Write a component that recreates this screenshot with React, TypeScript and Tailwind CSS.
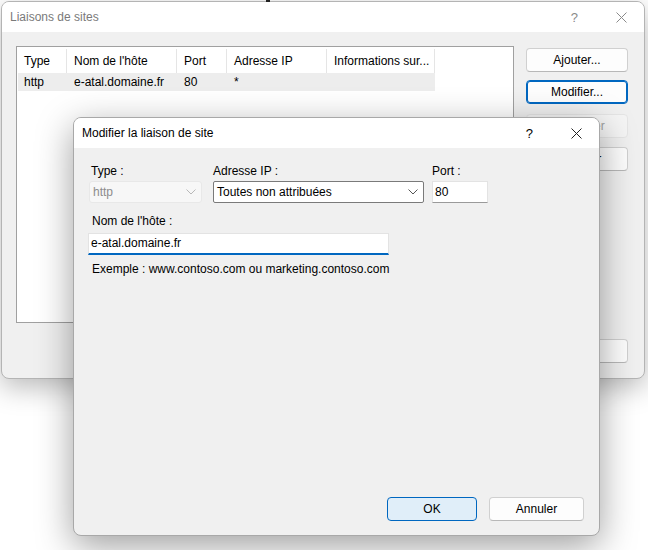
import React from 'react';

const Chevron: React.FC<{ color: string }> = ({ color }) => (
  <svg width="10" height="6" viewBox="0 0 10 6" fill="none">
    <path d="M0.5 0.5 L5 5 L9.5 0.5" stroke={color} strokeWidth="1" />
  </svg>
);

const CloseIcon: React.FC<{ color: string }> = ({ color }) => (
  <svg width="11" height="11" viewBox="0 0 11 11" fill="none">
    <path d="M0.5 0.5 L10.5 10.5 M10.5 0.5 L0.5 10.5" stroke={color} strokeWidth="1" />
  </svg>
);

const COLUMNS = [
  { label: 'Type', width: 'w-[50px]' },
  { label: "Nom de l'hôte", width: 'w-[110px]' },
  { label: 'Port', width: 'w-[50px]' },
  { label: 'Adresse IP', width: 'w-[100px]' },
  { label: 'Informations sur...', width: 'w-[108px]' },
];

const ROW = ['http', 'e-atal.domaine.fr', '80', '*', ''];

const WinButton: React.FC<{ label: string; className?: string; variant?: 'normal' | 'default' | 'disabled' | 'primary' }> = ({
  label,
  className = '',
  variant = 'normal',
}) => {
  const styles = {
    normal: 'bg-[#fdfdfd] border-[#d0d0d0] border-b-[#b8b8b8] text-black',
    default: 'bg-[#fdfdfd] border-[#0067c0] text-black shadow-[inset_0_0_0_1px_#0067c0]',
    disabled: 'bg-[#f5f5f5] border-[#e5e5e5] text-[#a0a0a0]',
    primary: 'bg-[#e0eef9] border-[#0067c0] text-black',
  }[variant];
  return (
    <div className={`h-[24px] flex items-center justify-center rounded-[4px] border text-[12px] ${styles} ${className}`}>
      {label}
    </div>
  );
};

export default function App() {
  return (
    <div className="relative w-[648px] h-[550px] bg-white overflow-hidden font-['Liberation_Sans',Arial,sans-serif] text-[12px] leading-[15px] text-black">
      {/* mouse pointer tip peeking at the top */}
      <span className="absolute left-[266px] top-0 w-[4px] h-[2px] bg-[#222] z-30" />

      {/* Back window: Liaisons de sites */}
      <div className="absolute left-[1px] top-[1px] w-[644px] h-[378px] rounded-[8px] border border-[#b4b4b4] bg-[#f0f0f0] overflow-hidden shadow-[0_8px_28px_rgba(0,0,0,0.28)] flex flex-col">
        <div className="h-[30px] bg-white flex items-center pl-[8px] shrink-0">
          <span className="text-[#7a7a7a]">Liaisons de sites</span>
          <span className="ml-auto text-[#8a8a8a] text-[13px] mr-[38px]">?</span>
          <span className="mr-[17px]"><CloseIcon color="#8a8a8a" /></span>
        </div>
        <div className="flex flex-1 pl-[14px] pt-[14px]">
          <div className="w-[498px] h-[277px] bg-white border border-[#a0a0a0] flex flex-col">
            <div className="flex h-[26px] pt-[2px]">
              {COLUMNS.map((c) => (
                <div key={c.label} className={`${c.width} flex items-center pl-[7px] border-r border-[#e5e5e5] whitespace-nowrap`}>
                  {c.label}
                </div>
              ))}
            </div>
            <div className="flex h-[18px] ml-[1px] w-[417px] bg-[#ededed] pt-[1px]">
              {ROW.map((v, i) => (
                <div key={i} className={`${COLUMNS[i].width} flex items-center pl-[7px] whitespace-nowrap first:w-[49px] first:pl-[6px]`}>
                  {v}
                </div>
              ))}
            </div>
          </div>
          <div className="flex flex-col ml-[12px] w-[102px] pt-[2px]">
            <WinButton label="Ajouter..." />
            <WinButton label="Modifier..." variant="default" className="mt-[8px]" />
            <WinButton label="Supprimer" variant="disabled" className="mt-[10px]" />
            <WinButton label="Parcourir" className="mt-[9px]" />
            <WinButton label="Fermer" className="mt-[168px]" />
          </div>
        </div>
      </div>

      {/* Front dialog: Modifier la liaison de site */}
      <div className="absolute left-[73px] top-[117px] w-[527px] h-[419px] rounded-[8px] border border-[#a8a8a8] bg-[#f0f0f0] overflow-hidden shadow-[0_10px_36px_rgba(0,0,0,0.38)] flex flex-col z-10">
        <div className="h-[30px] bg-white flex items-center pl-[8px] shrink-0">
          <span>Modifier la liaison de site</span>
          <span className="ml-auto text-[13px] mr-[38px]">?</span>
          <span className="mr-[17px]"><CloseIcon color="#222" /></span>
        </div>
        <div className="flex flex-col flex-1 pl-[15px] pt-[16px] pr-[15px] pb-[14px]">
          <div className="flex items-start">
            <div className="flex flex-col w-[113px]">
              <span className="pl-[2px]">Type :</span>
              <div className="mt-[2px] h-[22px] rounded-[3px] bg-[#f7f7f7] border border-[#e8e8e8] flex items-center pl-[3px] pr-[5px] text-[#8c8c8c]">
                <span>http</span>
                <span className="ml-auto"><Chevron color="#b8b8b8" /></span>
              </div>
            </div>
            <div className="flex flex-col w-[211px] ml-[11px]">
              <span>Adresse IP :</span>
              <div className="mt-[2px] h-[22px] rounded-[2px] bg-white border border-[#7a7a7a] flex items-center pl-[3px] pr-[5px]">
                <span>Toutes non attribuées</span>
                <span className="ml-auto"><Chevron color="#555" /></span>
              </div>
            </div>
            <div className="flex flex-col w-[56px] ml-[8px]">
              <span>Port :</span>
              <div className="mt-[2px] h-[22px] bg-white border border-[#e3e3e3] border-b-[#9a9a9a] flex items-center pl-[2px]">
                <span>80</span>
              </div>
            </div>
          </div>
          <span className="mt-[11px] pl-[3px]">Nom de l'hôte :</span>
          <div className="mt-[4px] -ml-[1px] w-[301px] h-[22px] bg-white border border-[#e3e3e3] border-b-2 border-b-[#0067c0] flex items-center pl-[2px]">
            <span>e-atal.domaine.fr</span>
          </div>
          <span className="mt-[7px] pl-[3px]">Exemple : www.contoso.com ou marketing.contoso.com</span>
          <div className="mt-auto flex justify-end gap-[12px]">
            <WinButton label="OK" variant="primary" className="w-[90px]" />
            <WinButton label="Annuler" className="w-[95px]" />
          </div>
        </div>
      </div>
    </div>
  );
}
